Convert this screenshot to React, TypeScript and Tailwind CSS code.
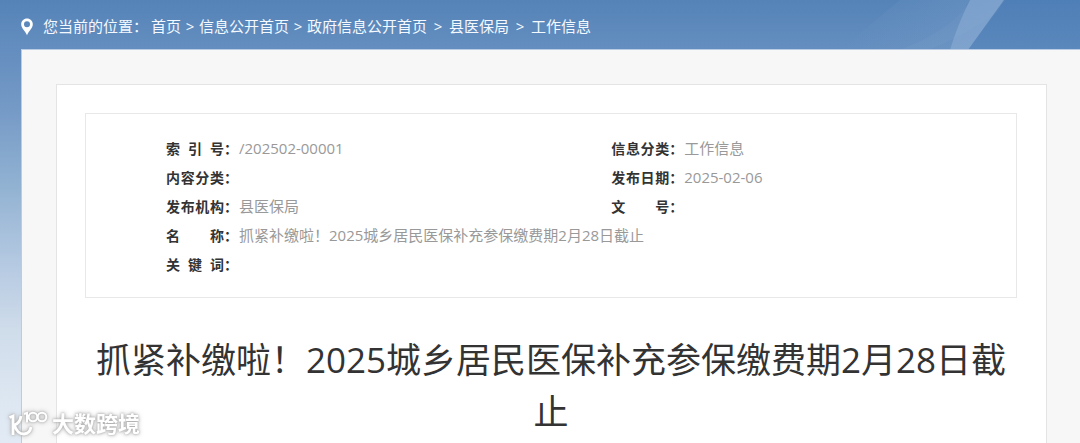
import type { ReactNode } from "react";

const crumbs = ["首页", "信息公开首页", "政府信息公开首页", "县医保局", "工作信息"];

function Field({ label, wide, children }: { label: string; wide?: boolean; children?: ReactNode }) {
  return (
    <div className={wide ? "col-span-2 flex" : "flex"}>
      <dt className="flex w-[73px] shrink-0 text-[14px] font-bold whitespace-nowrap text-[#333]">
        <span className="w-[58px] shrink-0 [text-align-last:justify]">{label}</span>：
      </dt>
      <dd className="text-[#999]">{children}</dd>
    </div>
  );
}

function PinIcon() {
  return (
    <svg viewBox="0 0 12 18" className="h-[18px] w-3 shrink-0" aria-hidden="true">
      <path
        fill="#fff"
        fillRule="evenodd"
        d="M6 0.5C2.7 0.5 0.2 3 0.2 6.2C0.2 10 4 12.6 6 17.2C8 12.6 11.8 10 11.8 6.2C11.8 3 9.3 0.5 6 0.5ZM6 3.2A3 3 0 1 1 6 9.2A3 3 0 1 1 6 3.2Z"
      />
    </svg>
  );
}

function Streaks() {
  return (
    <svg viewBox="0 0 240 50" className="absolute top-0 right-0 h-[50px] w-[240px]" aria-hidden="true">
      <defs>
        <linearGradient id="haze" x1="0" x2="1" y1="0" y2="0">
          <stop offset="0" stopColor="#8fb0d4" stopOpacity="0" />
          <stop offset="1" stopColor="#8fb0d4" stopOpacity="0.25" />
        </linearGradient>
        <linearGradient id="deep" x1="0" x2="0" y1="0" y2="1">
          <stop offset="0" stopColor="#4a7cb5" stopOpacity="0.6" />
          <stop offset="1" stopColor="#5484bb" stopOpacity="0.6" />
        </linearGradient>
      </defs>
      <path d="M60 0H165L128 50H0Z" fill="url(#haze)" />
      <path d="M131 0H164L158 12Q120 38 88 50H60Q115 28 131 0Z" fill="#8fb0d8" fillOpacity="0.12" />
      <path d="M130 0H164L128 50H110Q117 26 130 0Z" fill="#9ab8dc" fillOpacity="0.4" />
      <path d="M164 0H240V50H128Z" fill="url(#deep)" />
    </svg>
  );
}

function Watermark() {
  return (
    <div className="pointer-events-none fixed bottom-1 left-2 flex items-center gap-1 text-white [filter:drop-shadow(0_0_1px_#aaa)_drop-shadow(0_0_2px_#bbb)]">
      <svg viewBox="0 0 40 28" className="h-7 w-10" fill="none" stroke="#fff" aria-hidden="true">
        <path d="M1.5 8.500L5 7V26M13 7Q12 14 6.5 16Q9 25 16 25Q22 24.5 23 18" strokeWidth="2.8" />
        <path d="M16 5L19 4V13.5" strokeWidth="2" />
        <circle cx="25" cy="8" r="4.3" strokeWidth="2" />
        <circle cx="34" cy="8" r="4.3" strokeWidth="2" />
      </svg>
      <span className="text-[22px] leading-8 font-bold">大数跨境</span>
    </div>
  );
}

export default function App() {
  return (
    <div className="relative flex min-h-screen flex-col bg-[linear-gradient(180deg,#5583b8_0px,#648ebf_50px,#759ac6_110px,#8fb0d1_180px,#b3c8e1_260px,#cfdcea_330px,#dde7f2_400px,#e2ebf5_443px)] pl-[21px] font-['Open_Sans','Noto_Sans_CJK_SC',sans-serif]">
      <Streaks />
      <nav className="relative flex h-[49px] items-center pt-1 text-[15px] whitespace-pre text-[#f4f9ff]" aria-label="当前位置">
        <PinIcon />
        <span className="ml-[10px] w-[108px]">您当前的位置：</span>
        {crumbs.map((name, i) => (
          <span key={name} className="flex">
            {i > 0 && <span className={i > 2 ? "w-[22px] text-center" : "w-[18px] text-center"}>&gt;</span>}
            <a href="#">{name}</a>
          </span>
        ))}
      </nav>

      <div className="relative flex flex-1 flex-col border-t border-l border-[#b9cce4] bg-[#f7f7f7] pt-[34px] pr-[33px] pl-[34px]">
        <main className="flex-1 border border-b-0 border-[#e4e4e4] bg-white pt-7 pr-[29px] pl-7">
          <dl className="grid grid-cols-[11fr_10fr] border border-[#e8e8e8] pt-5 pb-[18px] pl-20 text-[15px] leading-[29px]">
            <Field label="索引号">/202502-00001</Field>
            <Field label="信息分类">工作信息</Field>
            <Field label="内容分类" />
            <Field label="发布日期">2025-02-06</Field>
            <Field label="发布机构">县医保局</Field>
            <Field label="文号" />
            <Field label="名称" wide>
              抓紧补缴啦！2025城乡居民医保补充参保缴费期2月28日截止
            </Field>
            <Field label="关键词" wide />
          </dl>
          <h1 className="mt-9 text-center text-[35px] leading-[52px] font-normal text-[#333]">
            抓紧补缴啦！2025城乡居民医保补充参保缴费期2月28日截止
          </h1>
        </main>
      </div>
      <Watermark />
    </div>
  );
}
